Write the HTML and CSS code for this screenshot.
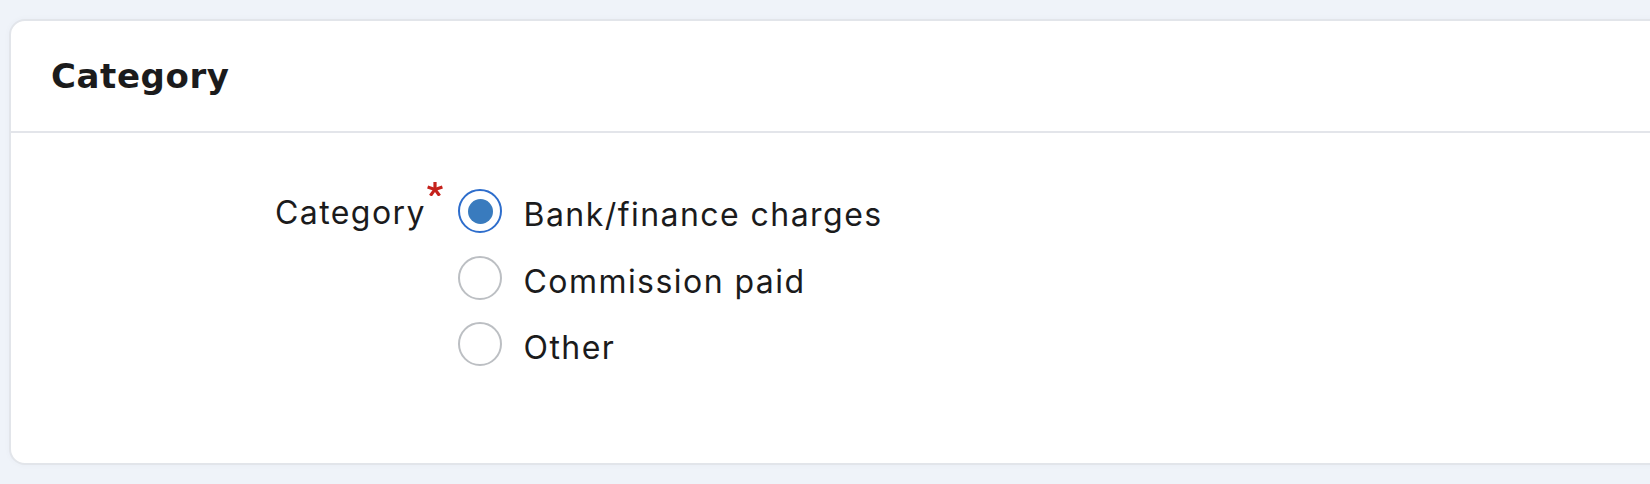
FILE: index.html
```html
<!DOCTYPE html>
<html lang="en">
<head>
<meta charset="utf-8">
<title>Category</title>
<link rel="stylesheet" href="styles.css">
</head>
<body>
<div class="page">
  <section class="card">
    <header class="card-header">
      <h2 class="card-title">Category</h2>
    </header>
    <div class="card-body">
      <div class="field">
        <div class="field-label">
          <span class="label-text">Category</span>
          <svg class="required" width="16" height="14" viewBox="0 0 16 14" aria-hidden="true">
            <g stroke="#c5221c" stroke-width="3.2" stroke-linecap="butt">
              <line x1="8" y1="7.4" x2="8" y2="0"/>
              <line x1="8" y1="7.4" x2="15.4" y2="5"/>
              <line x1="8" y1="7.4" x2="12.6" y2="13.7"/>
              <line x1="8" y1="7.4" x2="3.4" y2="13.7"/>
              <line x1="8" y1="7.4" x2="0.6" y2="5"/>
            </g>
          </svg>
        </div>
        <div class="options">
          <label class="option">
            <span class="radio radio-checked"><span class="radio-dot"></span></span>
            <span class="option-text">Bank/finance charges</span>
          </label>
          <label class="option">
            <span class="radio"></span>
            <span class="option-text">Commission paid</span>
          </label>
          <label class="option">
            <span class="radio"></span>
            <span class="option-text">Other</span>
          </label>
        </div>
      </div>
    </div>
  </section>
</div>
</body>
</html>
```
FILE: styles.css
```css
html, body {
  margin: 0;
  padding: 0;
}
body {
  background: #eff3f9;
  color: #1b1b1c;
  font-family: "Inter", "Liberation Sans", sans-serif;
  overflow: hidden;
}
.page {
  padding: 19px 0 0 9px;
  overflow: hidden;
  height: 484px;
  box-sizing: border-box;
}
.card {
  box-sizing: border-box;
  height: 446px;
  margin-right: -40px;
  background: #ffffff;
  border: 2px solid #e2e5ea;
  border-radius: 16px;
  box-shadow: 0 0 6px rgba(30, 50, 90, 0.03);
  display: flex;
  flex-direction: column;
}
.card-header {
  box-sizing: border-box;
  height: 112px;
  padding: 36px 40px 0;
  border-bottom: 2px solid #e3e5ea;
}
.card-title {
  margin: 0;
  font-family: "DejaVu Sans", "Inter", sans-serif;
  font-weight: 700;
  font-size: 34px;
  line-height: 38px;
  letter-spacing: 0.6px;
  color: #1b1b1c;
}
.card-body {
  flex: 1;
  padding-top: 56px;
}
.field {
  display: grid;
  grid-template-columns: 432px 1fr;
  column-gap: 15px;
  align-items: start;
}
.field-label {
  display: flex;
  justify-content: flex-end;
  align-items: flex-start;
}
.label-text {
  font-size: 32px;
  line-height: 44px;
  letter-spacing: 1.45px;
  margin-top: 2px;
}
.required {
  display: block;
  margin-top: -7px;
  margin-left: 1px;
}
.options {
  display: flex;
  flex-direction: column;
}
.option {
  display: flex;
  align-items: flex-start;
  height: 66.5px;
}
.radio {
  box-sizing: border-box;
  width: 44px;
  height: 44px;
  flex: 0 0 44px;
  border: 2px solid #bcbfc3;
  border-radius: 50%;
  display: flex;
  align-items: center;
  justify-content: center;
  background: #fff;
}
.radio-checked {
  border-color: #2d6dcc;
}
.radio-dot {
  width: 25px;
  height: 25px;
  border-radius: 50%;
  background: #397bbe;
}
.option-text {
  font-size: 32px;
  line-height: 44px;
  letter-spacing: 1.45px;
  margin: 4px 0 0 21.5px;
}
```
